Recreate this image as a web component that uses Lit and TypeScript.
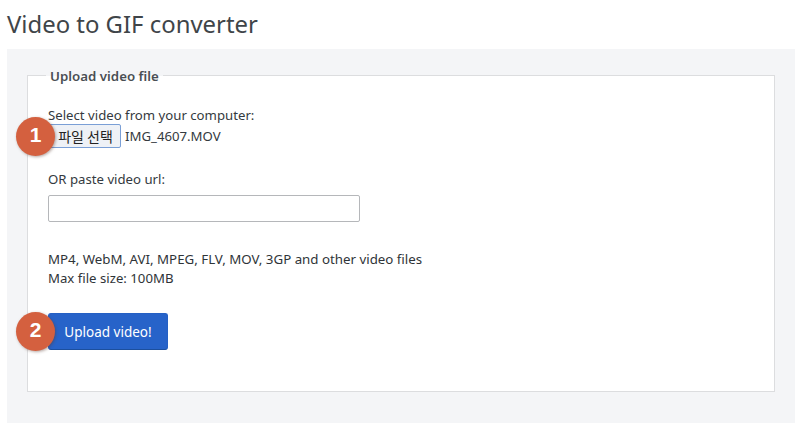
import { LitElement, html, css } from "lit";
import { customElement } from "lit/decorators.js";

@customElement("app-root")
export class AppRoot extends LitElement {
  static styles = css`
    :host { display: block; width: 802px; height: 431px; overflow: hidden; background: #fff; font-family: "Noto Sans", "Noto Sans CJK KR", sans-serif; font-size: 13.3px; color: #343a40; }
    * { box-sizing: border-box; }
    h1 { margin: 0; padding: 8px 0 0 7px; height: 49px; font-size: 23.9px; line-height: 32px; font-weight: 400; color: #3f4549; }
    .panel { margin: 0 7px; height: 374px; padding: 26px 20px 0; background: #f4f5f7; }
    fieldset { position: relative; margin: 0; height: 317px; padding: 0 20px; border: 1px solid #dcdddf; background: #fff; display: block; }
    .legend { position: absolute; top: -9px; left: 18px; padding: 0 4px; font-weight: 600; font-size: 13.3px; line-height: 18px; color: #4a4f54; background: linear-gradient(#f4f5f7 50%, #fff 50%); }
    .content { display: flex; flex-direction: column; align-items: flex-start; padding-top: 30px; }
    .label { line-height: 18px; font-size: 13.2px; }
    .file { display: flex; align-items: center; gap: 4px; height: 24px; font-size: 13.2px; }
    .file-btn { width: 73px; height: 24px; padding: 0 0 0 2px; border: 1px solid #7a9fd6; border-radius: 2px; background: #eef1f6; display: flex; align-items: center; justify-content: center; font-size: 14px; font-weight: 400; color: #222; font-family: "Noto Sans CJK KR", sans-serif; white-space: nowrap; }
    .or { margin-top: 22px; }
    .url { display: block; width: 312px; height: 27px; margin-top: 7px; border: 1px solid #b5b7ba; border-radius: 2px; background: #fff; }
    .info { margin-top: 28px; line-height: 19px; color: #2f3438; }
    .max { font-size: 13.2px; }
    .submit { position: relative; margin-top: 25px; width: 120px; height: 37px; border: 1px solid #2560c4; border-bottom-color: #1c4f9e; border-radius: 3px; background: #2763c9; color: #fff; font: inherit; font-size: 13.5px; padding: 0; }
    .badge { position: absolute; width: 39px; height: 39px; padding-bottom: 4px; border-radius: 50%; background: #d4603f; color: #fff; font-family: "Liberation Sans", sans-serif; font-weight: 700; font-size: 21px; display: flex; align-items: center; justify-content: center; box-shadow: 1px 1px 3px rgba(90, 60, 50, .45); }
    .b1 { left: -12px; top: 41px; }
    .b2 { left: -12px; top: 236px; }
  `;

  render() {
    return html`
      <h1>Video to GIF converter</h1>
      <div class="panel">
        <fieldset>
          <div class="legend">Upload video file</div>
          <div class="content">
            <div class="label">Select video from your computer:</div>
            <div class="file"><div class="file-btn">파일 선택</div><span>IMG_4607.MOV</span></div>
            <div class="label or">OR paste video url:</div>
            <div class="url"></div>
            <div class="info">MP4, WebM, AVI, MPEG, FLV, MOV, 3GP and other video files<br /><span class="max">Max file size: 100MB</span></div>
            <button class="submit">Upload video!</button>
          </div>
          <div class="badge b1">1</div>
          <div class="badge b2">2</div>
        </fieldset>
      </div>
    `;
  }
}
